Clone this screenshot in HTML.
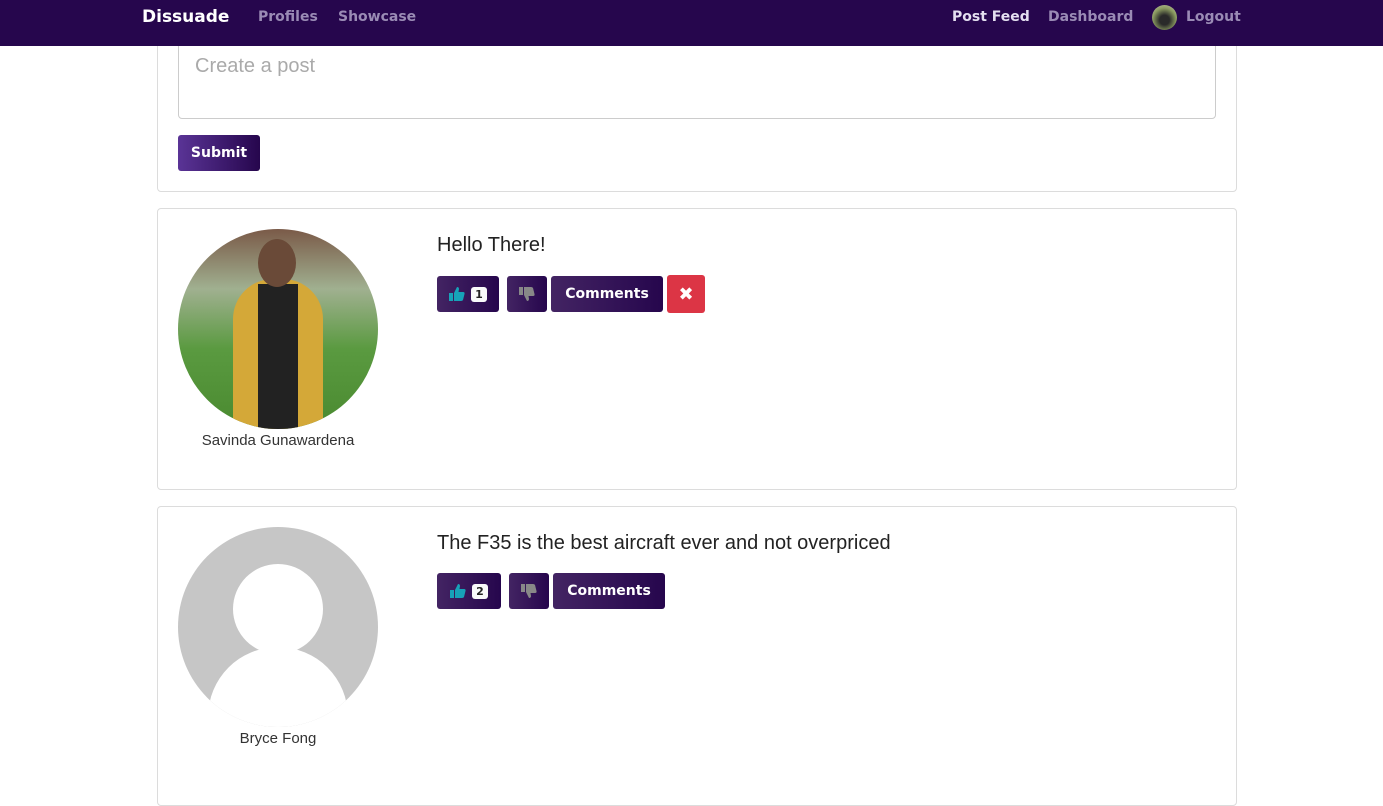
<!DOCTYPE html>
<html><head><style>
*{box-sizing:border-box;margin:0;padding:0}
body{width:1383px;height:779px;overflow:hidden;background:#fff;font-family:"Liberation Sans",sans-serif;position:relative;color:#212529}
.nav{position:absolute;top:0;left:0;width:1383px;height:46px;background:#26064d;z-index:10}
.nav span{position:absolute;font-family:"DejaVu Sans","Liberation Sans",sans-serif;font-weight:bold;top:9px;font-size:14px;color:#9a8bb5}
.card{position:absolute;left:157px;width:1080px;border:1px solid #dcdcdc;border-radius:4px;background:#fff}
.btn{position:absolute;height:36px;border-radius:3px;background:linear-gradient(90deg,#432463,#26064d);color:#fff;font-family:"DejaVu Sans",sans-serif;font-weight:bold;font-size:14px;display:flex;align-items:center;justify-content:center}
.av{position:absolute;left:20px;width:200px;height:200px;border-radius:50%;overflow:hidden}
.name{position:absolute;left:0;width:240px;text-align:center;font-size:15px;color:#333}
.txt{position:absolute;left:279px;font-size:20px;color:#222}
.badge{background:#f8f9fa;color:#222;border-radius:3px;font-size:11px;padding:1px 4px;margin-left:6px}
</style></head><body>
<div class="nav">
<span style="left:142px;top:7px;color:#fff;font-size:17px">Dissuade</span>
<span style="left:258px">Profiles</span>
<span style="left:338px">Showcase</span>
<span style="left:952px;color:#e4dff0">Post Feed</span>
<span style="left:1048px">Dashboard</span>
<div style="position:absolute;left:1152px;top:5px;width:25px;height:25px;border-radius:50%;background:radial-gradient(circle at 50% 60%,#2a2a2a 25%,#8a9a60 60%,#c8c8b0)"></div>
<span style="left:1186px">Logout</span>
</div>
<div class="card" style="top:20px;height:172px">
<div style="position:absolute;left:20px;top:18px;width:1038px;height:80px;border:1px solid #ccc;border-radius:4px;padding:15px 16px;font-size:20px;color:#aaa">Create a post</div>
<div class="btn" style="left:20px;top:114px;width:82px;height:36px;background:linear-gradient(90deg,#5a3496,#26064d)">Submit</div>
</div>
<div class="card" style="top:208px;height:282px">
<div class="av" style="top:20px;background:linear-gradient(180deg,#7a5a48 0%,#a0b090 30%,#5a9a40 60%,#4a8a30 100%)">
<div style="position:absolute;left:55px;top:50px;width:90px;height:160px;background:#d4a838;border-radius:40px 40px 0 0"></div>
<div style="position:absolute;left:80px;top:55px;width:40px;height:145px;background:#222"></div>
<div style="position:absolute;left:80px;top:10px;width:38px;height:48px;background:#6a4a38;border-radius:50%"></div>
</div>
<div class="name" style="top:223px;left:0px">Savinda Gunawardena</div>
<div class="txt" style="top:25px">Hello There!</div>
<div class="btn" style="left:279px;top:67px;width:62px"><svg width="16" height="16" viewBox="0 0 16 16"><rect x="0" y="7" width="4" height="8" fill="#17a2b8"/><path d="M5 7 L8 1 Q10 1 10 3 L9.5 6 H14 Q16 6 15.5 8 L14 14 Q13.5 15 12 15 H5 Z" fill="#17a2b8"/></svg><span class="badge">1</span></div>
<div class="btn" style="left:349px;top:67px;width:40px"><svg width="16" height="16" viewBox="0 0 16 16" style="transform:scaleY(-1)"><rect x="0" y="7" width="4" height="8" fill="#888"/><path d="M5 7 L8 1 Q10 1 10 3 L9.5 6 H14 Q16 6 15.5 8 L14 14 Q13.5 15 12 15 H5 Z" fill="#888"/></svg></div>
<div class="btn" style="left:393px;top:67px;width:112px">Comments</div>
<div class="btn" style="left:509px;top:66px;width:38px;height:38px;background:#dc3545;font-size:18px">✖</div>
</div>
<div class="card" style="top:506px;height:300px">
<div class="av" style="top:20px;background:#c6c6c6">
<div style="position:absolute;left:55px;top:37px;width:90px;height:90px;border-radius:50%;background:#fff"></div>
<div style="position:absolute;left:30px;top:120px;width:140px;height:140px;border-radius:50%;background:#fff"></div>
</div>
<div class="name" style="top:223px">Bryce Fong</div>
<div class="txt" style="top:25px">The F35 is the best aircraft ever and not overpriced</div>
<div class="btn" style="left:279px;top:66px;width:64px"><svg width="16" height="16" viewBox="0 0 16 16"><rect x="0" y="7" width="4" height="8" fill="#17a2b8"/><path d="M5 7 L8 1 Q10 1 10 3 L9.5 6 H14 Q16 6 15.5 8 L14 14 Q13.5 15 12 15 H5 Z" fill="#17a2b8"/></svg><span class="badge">2</span></div>
<div class="btn" style="left:351px;top:66px;width:40px"><svg width="16" height="16" viewBox="0 0 16 16" style="transform:scaleY(-1)"><rect x="0" y="7" width="4" height="8" fill="#888"/><path d="M5 7 L8 1 Q10 1 10 3 L9.5 6 H14 Q16 6 15.5 8 L14 14 Q13.5 15 12 15 H5 Z" fill="#888"/></svg></div>
<div class="btn" style="left:395px;top:66px;width:112px">Comments</div>
</div>
</body></html>
